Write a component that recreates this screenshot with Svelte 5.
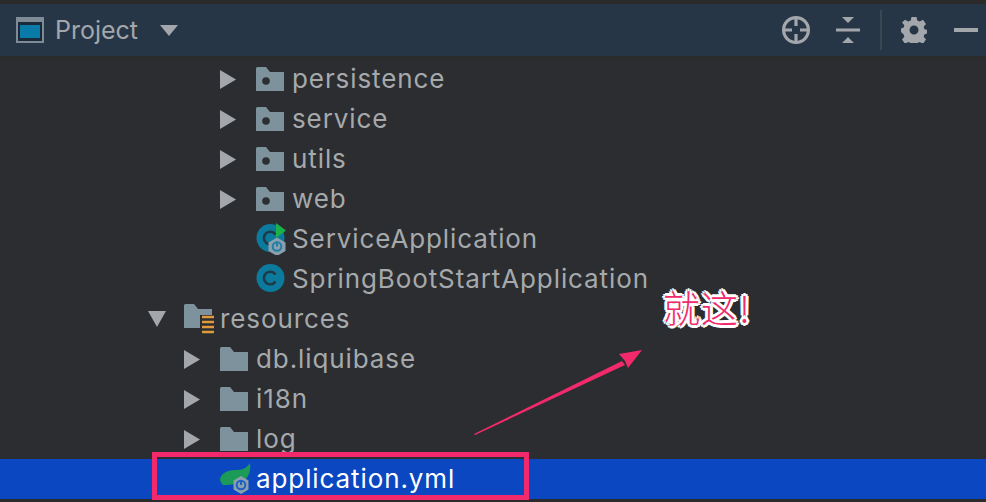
<script lang="ts">
  interface Row {
    name: string;
    depth: number;
    icon: 'pkg' | 'boot' | 'cls' | 'res' | 'folder' | 'yml';
    arrow?: 'right' | 'down';
    selected?: boolean;
  }

  const rows: Row[] = [
    { name: 'persistence', depth: 2, icon: 'pkg', arrow: 'right' },
    { name: 'service', depth: 2, icon: 'pkg', arrow: 'right' },
    { name: 'utils', depth: 2, icon: 'pkg', arrow: 'right' },
    { name: 'web', depth: 2, icon: 'pkg', arrow: 'right' },
    { name: 'ServiceApplication', depth: 2, icon: 'boot' },
    { name: 'SpringBootStartApplication', depth: 2, icon: 'cls' },
    { name: 'resources', depth: 0, icon: 'res', arrow: 'down' },
    { name: 'db.liquibase', depth: 1, icon: 'folder', arrow: 'right' },
    { name: 'i18n', depth: 1, icon: 'folder', arrow: 'right' },
    { name: 'log', depth: 1, icon: 'folder', arrow: 'right' },
    { name: 'application.yml', depth: 1, icon: 'yml', selected: true }
  ];

  const folderPath = 'M0 1.5 Q0 0 1.5 0 H10 L14 5 H28 V24 H0 Z';
</script>

<div class="panel">
  <header class="toolbar">
    <svg class="win" width="28" height="26" viewBox="0 0 28 26">
      <rect width="28" height="26" fill="#7f8b96" />
      <rect x="2" y="5" width="24" height="19" fill="#1b2a38" />
      <rect x="4" y="8" width="20" height="13" fill="#0a7aa8" />
    </svg>
    <span class="title">Project</span>
    <svg class="caret" width="18" height="11" viewBox="0 0 18 11"><path d="M0 0H18L9 11Z" fill="#a3a7ab" /></svg>

    <div class="actions">
      <svg class="target" width="28" height="28" viewBox="0 0 28 28" fill="none" stroke="#a3a7ab" stroke-width="3.2">
        <circle cx="14" cy="14" r="12.4" />
        <path d="M14 1.500V10M14 18V26.500M1.500 14H10M18 14H26.500" />
      </svg>
      <svg width="24" height="26" viewBox="0 0 24 26" fill="#a3a7ab">
        <path d="M6 0H18L12 6ZM0 11.5H24V14.5H0ZM6 26H18L12 20Z" />
      </svg>
      <span class="sep"></span>
      <svg width="26" height="26" viewBox="0 0 26 26" fill="#a3a7ab">
        <path fill-rule="evenodd" d="M10.500 0h5l.8 3.600 2.400 1 3.300-1.900 3 4.300-2.300 2.800.6 2.200 2.700 1v3.500l-2.700 1-.6 2.200 2.300 2.800-3 4.300-3.300-1.900-2.400 1-.8 1.100h-5l-.8-1.100-2.400-1-3.300 1.900-3-4.300 2.300-2.800-.6-2.200L0 15V11.500l2.700-1 .6-2.200L1 5.500l3-2.800 3.300 1.900 2.400-1ZM13 8.500a4.500 4.500 0 1 0 0 9 4.500 4.500 0 0 0 0-9Z" />
      </svg>
      <span class="minus"></span>
    </div>
  </header>

  <div class="tree">
    {#each rows as row}
      <div class="row" class:selected={row.selected} style="padding-left: {148 + row.depth * 36}px">
        <span class="arrow">
          {#if row.arrow === 'right'}
            <svg width="16" height="19" viewBox="0 0 16 19"><path d="M0 0L16 9.500L0 19Z" fill="#a3a7ab" /></svg>
          {:else if row.arrow === 'down'}
            <svg class="down" width="18" height="16" viewBox="0 0 18 16"><path d="M0 0H18L9 16Z" fill="#a3a7ab" /></svg>
          {/if}
        </span>
        <span class="icon">
          {#if row.icon === 'pkg'}
            <svg width="28" height="24" viewBox="0 0 28 24">
              <path d={folderPath} fill="#7e929d" />
              <circle cx="10" cy="14" r="3.800" fill="#2b2d30" />
            </svg>
          {:else if row.icon === 'folder'}
            <svg width="28" height="24" viewBox="0 0 28 24"><path d={folderPath} fill="#7e929d" /></svg>
          {:else if row.icon === 'res'}
            <svg width="32" height="30" viewBox="0 0 32 30">
              <path d={folderPath} fill="#7e929d" />
              <rect x="16" y="11" width="16" height="19" fill="#2b2d30" />
              <path d="M18 13H30M18 18H30M18 23H30M18 28H30" stroke="#e09a3c" stroke-width="2.400" />
            </svg>
          {:else if row.icon === 'cls' || row.icon === 'boot'}
            <svg width="32" height="32" viewBox="0 0 32 32">
              <circle cx="14.500" cy="15" r="14" fill="#0c7a9c" />
              <path d="M19.500 11.500a6.300 6.300 0 1 0 0 7" fill="none" stroke="#1f3a48" stroke-width="2.600" />
              {#if row.icon === 'boot'}
                <path d="M20 0L30 7.500L20 15Z" fill="#1cb04a" />
                <path d="M21 14.500L29.500 19.500V28L21 33L12.500 28V19.500Z" fill="#8aa0ac" />
                <circle cx="21" cy="23.500" r="4.300" fill="none" stroke="#1f7fa8" stroke-width="2" />
                <path d="M21 18.500V23.500" stroke="#1f7fa8" stroke-width="2" />
              {/if}
            </svg>
          {:else}
            <svg width="32" height="32" viewBox="0 0 32 32">
              <path d="M0 16C2 8 11 7 17 7C24 7 27 4 30 0C31 7 29 15 23 18C17 22 7 22 3 22C1 20 0 18 0 16Z" fill="#1c9a57" />
              <path d="M21 13L28.500 17.500V26.500L21 31L13.500 26.500V17.500Z" fill="#8aa0ac" />
              <circle cx="21" cy="22" r="4.300" fill="none" stroke="#1c62c4" stroke-width="2" />
              <path d="M21 17V22" stroke="#1c62c4" stroke-width="2" />
            </svg>
          {/if}
        </span>
        <span class="name">{row.name}</span>
      </div>
    {/each}
  </div>

  <!-- annotation drawn over the tree -->
  <div class="mark"></div>
  <svg class="pointer" width="180" height="100" viewBox="0 0 180 100">
    <path d="M1 87L2 88L152 18L149 14Z" fill="#f22a6b" />
    <path d="M169 3L146 7L152 14L155 21Z" fill="#f22a6b" />
  </svg>
  <div class="note">就这!</div>
</div>

<style>
  :global(body) {
    margin: 0;
    background: #2b2b2b;
  }

  .panel {
    position: relative;
    width: 986px;
    height: 502px;
    overflow: hidden;
    padding-top: 4px;
    box-sizing: border-box;
    background: #2b2b2b;
    font-family: Inter, "Liberation Sans", sans-serif;
  }

  .toolbar {
    display: flex;
    align-items: center;
    height: 52px;
    padding-left: 16px;
    background: #263646;
  }

  .win {
    margin-right: 11px;
  }

  .title {
    font-size: 25px;
    color: #a3a7ab;
    margin-right: 22px;
  }

  .actions {
    display: flex;
    align-items: center;
    margin-left: auto;
    padding-right: 8px;
  }

  .target {
    margin-right: 26px;
  }

  .sep {
    width: 2px;
    height: 40px;
    margin: 0 19px 0 20px;
    background: #3b4854;
  }

  .minus {
    width: 24px;
    height: 4px;
    margin-left: 27px;
    background: #a3a7ab;
  }

  .tree {
    margin-top: 3px;
    height: 440px;
    background: #2b2d30;
  }

  .row {
    display: flex;
    align-items: center;
    height: 40px;
    box-sizing: border-box;
  }

  .row.selected {
    background: #0a47c0;
  }

  .arrow {
    display: flex;
    align-items: center;
    width: 36px;
    flex: none;
  }

  .icon {
    display: flex;
    align-items: center;
    width: 36px;
    flex: none;
  }

  .name {
    font-size: 26px;
    line-height: 30px;
    letter-spacing: 0.9px;
    color: #a6a9ac;
    white-space: nowrap;
  }

  .selected .name {
    color: #fff;
  }

  .mark {
    position: absolute;
    left: 152px;
    top: 452px;
    width: 377px;
    height: 48px;
    box-sizing: border-box;
    border: 5px solid #f22a6b;
  }

  .pointer {
    position: absolute;
    left: 473px;
    top: 347px;
  }

  .note {
    position: absolute;
    left: 663px;
    top: 283px;
    font-family: "Noto Sans CJK SC", sans-serif;
    font-weight: 300;
    font-size: 37px;
    line-height: 48px;
    letter-spacing: 1px;
    color: #f22a6b;
    text-shadow: 3px 0 0 #fff, -3px 0 0 #fff, 0 3px 0 #fff, 0 -3px 0 #fff, 2px 2px 0 #fff, -2px 2px 0 #fff, 2px -2px 0 #fff, -2px -2px 0 #fff;
  }
</style>
